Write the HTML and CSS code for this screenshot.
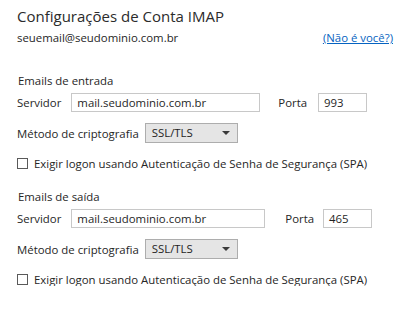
FILE: index.html
```html
<!DOCTYPE html>
<html lang="pt-BR">
<head>
<meta charset="utf-8">
<link rel="stylesheet" href="styles.css">
</head>
<body>
<div class="dialog">
  <h1 class="title">Configurações de Conta IMAP</h1>
  <div class="account">
    <span class="email">seuemail@seudominio.com.br</span>
    <a class="link" href="#">(Não é você?)</a>
  </div>

  <section class="group group-in">
    <div class="group-title">Emails de entrada</div>
    <div class="row server-row">
      <span class="label">Servidor</span>
      <span class="input server">mail.seudominio.com.br</span>
      <span class="label port-label">Porta</span>
      <span class="input port">993</span>
    </div>
    <div class="row select-row">
      <span class="label">Método de criptografia</span>
      <span class="select">SSL/TLS<span class="arrow"></span></span>
    </div>
    <div class="row check-row">
      <span class="checkbox"></span>
      <span class="label">Exigir logon usando Autenticação de Senha de Segurança (SPA)</span>
    </div>
  </section>

  <section class="group group-out">
    <div class="group-title">Emails de saída</div>
    <div class="row server-row">
      <span class="label">Servidor</span>
      <span class="input server">mail.seudominio.com.br</span>
      <span class="label port-label">Porta</span>
      <span class="input port">465</span>
    </div>
    <div class="row select-row">
      <span class="label">Método de criptografia</span>
      <span class="select">SSL/TLS<span class="arrow"></span></span>
    </div>
    <div class="row check-row">
      <span class="checkbox"></span>
      <span class="label">Exigir logon usando Autenticação de Senha de Segurança (SPA)</span>
    </div>
  </section>
</div>
</body>
</html>
```
FILE: styles.css
```css
html, body {
  margin: 0;
  padding: 0;
  background: #ffffff;
}
body {
  font-family: "Open Sans", "Noto Sans", "Liberation Sans", sans-serif;
  font-size: 11.4px;
  color: #262626;
}
.dialog {
  padding: 5px 8px 0 17px;
  width: 376px;
}
.title {
  margin: 0;
  font-size: 15px;
  font-weight: 400;
  line-height: 22px;
  color: #2b2b2b;
}
.account {
  display: flex;
  justify-content: space-between;
  align-items: baseline;
  line-height: 20px;
  margin-top: 1px;
}
.link {
  color: #0563c1;
  text-decoration: underline;
}
.group-in {
  margin-top: 25px;
}
.group-out {
  margin-top: 19px;
}
.group-title {
  line-height: 16px;
  padding-left: 1px;
}
.row {
  display: flex;
  align-items: center;
}
.server-row {
  margin-top: 4px;
  height: 19px;
}
.input {
  box-sizing: border-box;
  height: 19px;
  border: 1px solid #c8c8c8;
  padding: 0 5px;
  line-height: 17px;
  color: #1f1f1f;
  background: #fff;
}
.server {
  margin-left: 10px;
}
.group-in .server { width: 189px; }
.group-out .server { width: 194px; }
.group-in .port-label { margin-left: 18px; }
.group-out .port-label { margin-left: 20px; }
.port {
  width: 49px;
}
.group-in .port { margin-left: 11px; }
.group-out .port { margin-left: 9px; }
.select-row {
  margin-top: 11px;
  height: 20px;
}
.select {
  box-sizing: border-box;
  position: relative;
  margin-left: 6px;
  width: 93px;
  height: 20px;
  border: 1px solid #adadad;
  background: #e5e5e5;
  padding: 0 6px;
  line-height: 18px;
  color: #1f1f1f;
}
.arrow {
  position: absolute;
  right: 7px;
  top: 7px;
  width: 0;
  height: 0;
  border-left: 4px solid transparent;
  border-right: 4px solid transparent;
  border-top: 4px solid #3a3a3a;
}
.check-row {
  margin-top: 13px;
  height: 14px;
}
.checkbox {
  box-sizing: border-box;
  width: 11px;
  height: 11px;
  border: 1px solid #5a5a5a;
  background: #fff;
  margin-right: 6px;
}
```
